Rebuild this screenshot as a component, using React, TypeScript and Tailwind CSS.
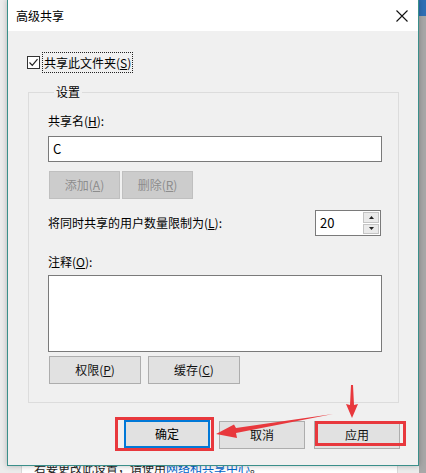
import React from 'react';

const font = { fontFamily: '"Noto Sans CJK SC", "Liberation Sans", sans-serif' };

function Btn({ label, disabled, className = '' }: { label: React.ReactNode; disabled?: boolean; className?: string }) {
  return (
    <div
      className={
        'flex items-center justify-center h-[28px] text-[12px] border ' +
        (disabled
          ? 'bg-[#cccccc] border-[#bfbfbf] text-[#8d8d8d] '
          : 'bg-[#e1e1e1] border-[#adadad] text-[#111] ') +
        className
      }
    >
      {label}
    </div>
  );
}

export default function App() {
  return (
    <div className="relative w-[426px] h-[473px] overflow-hidden bg-[#f3f3f3]" style={font}>
      {/* background window behind the dialog */}
      <div className="absolute left-0 top-0 w-[426px] h-[473px] flex">
        <div className="w-[22px] h-full bg-[#ececec] border-r border-[#d9d9d9]" />
        <div className="flex-1 bg-white flex flex-col justify-end">
          <div className="pl-[12px] h-[12px] overflow-hidden text-[12px] leading-[14px] text-[#222]">
            若要更改此设置，请使用<span className="text-[#0066cc] underline">网络和共享中心</span>。
          </div>
        </div>
        <div className="w-[22px] h-full bg-[#ececec] border-l border-[#d9d9d9]" />
        <div className="w-[7px] h-full bg-[#a8a8a8] flex flex-col">
          <div className="h-[16px] bg-[#2f6fb5]" />
        </div>
      </div>

      {/* dialog window */}
      <div className="absolute left-[7px] top-[-1px] w-[412px] h-[467px] border border-[#3a8f8a] bg-[#f0f0f0] flex flex-col shadow-[0_0_6px_rgba(0,0,0,0.25)]">
        {/* title bar */}
        <div className="h-[31px] bg-white flex items-center justify-between pl-[8px] pr-[9px]">
          <span className="text-[12px] text-black">高级共享</span>
          <svg width="14" height="14" viewBox="0 0 14 14">
            <path d="M1.5 1.5 L12.5 12.5 M12.5 1.5 L1.5 12.5" stroke="#111" strokeWidth="1.1" />
          </svg>
        </div>

        {/* body */}
        <div className="flex-1 flex flex-col pl-[19px] pr-[18px]">
          <div className="mt-[21px] flex items-center h-[21px]">
            <div className="w-[13px] h-[13px] border border-[#333] bg-white flex items-center justify-center">
              <svg width="11" height="11" viewBox="0 0 11 11">
                <path d="M1.5 5.5 L4.3 8.3 L9.5 2.2" fill="none" stroke="#222" strokeWidth="1.2" />
              </svg>
            </div>
            <div className="ml-[2px] h-[21px] px-[1px] flex items-center border border-dotted border-[#222] text-[12px] text-black">
              共享此文件夹(<span className="underline">S</span>)
            </div>
          </div>

          <fieldset className="mt-[12px] mx-[1px] h-[318px] border border-[#dcdcdc] pl-[19px] pr-[16px]">
            <legend className="ml-[6px] px-[2px] text-[12px] text-black leading-[14px]">设置</legend>
            <div className="mt-[14px] text-[12px] leading-[16px] text-black">
              共享名(<span className="underline">H</span>):
            </div>
            <div className="mt-[7px] h-[26px] border border-[#7a7a7a] bg-white flex items-center pl-[4px] text-[13px] text-black">
              C
            </div>
            <div className="mt-[9px] flex gap-[2px] pl-[1px]">
              <Btn disabled className="w-[71px]" label={<>添加(<span className="underline">A</span>)</>} />
              <Btn disabled className="w-[71px]" label={<>删除(<span className="underline">R</span>)</>} />
            </div>
            <div className="mt-[11px] flex items-center justify-between">
              <span className="text-[12px] text-black">
                将同时共享的用户数量限制为(<span className="underline">L</span>):
              </span>
              <div className="mr-[1px] w-[66px] h-[26px] border border-[#7a7a7a] bg-white flex">
                <div className="flex-1 flex items-center pl-[4px] text-[13px] text-black">20</div>
                <div className="w-[16px] my-[1px] mr-[1px] flex flex-col gap-[1px]">
                  <div className="flex-1 bg-[#eaeaea] border border-[#c4c4c4] flex items-center justify-center">
                    <svg width="5" height="3" viewBox="0 0 5 3"><path d="M0 3 L2.5 0 L5 3 Z" fill="#222" /></svg>
                  </div>
                  <div className="flex-1 bg-[#eaeaea] border border-[#c4c4c4] flex items-center justify-center">
                    <svg width="5" height="3" viewBox="0 0 5 3"><path d="M0 0 L2.5 3 L5 0 Z" fill="#222" /></svg>
                  </div>
                </div>
              </div>
            </div>
            <div className="mt-[18px] text-[12px] leading-[16px] text-black">
              注释(<span className="underline">O</span>):
            </div>
            <div className="mt-[5px] h-[77px] border border-[#7a7a7a] bg-white" />
            <div className="mt-[4px] flex gap-[7px] pl-[1px]">
              <Btn className="w-[92px]" label={<>权限(<span className="underline">P</span>)</>} />
              <Btn className="w-[92px]" label={<>缓存(<span className="underline">C</span>)</>} />
            </div>
          </fieldset>

          {/* dialog buttons */}
          <div className="mt-[18px] flex pl-[98px] gap-[8px]">
            <div className="w-[99px] h-[34px] border-[3px] border-[#e8383d] flex items-center justify-end pr-[1px] -ml-[10px] -mt-[4px]">
              <div className="w-[86px] h-[28px] border-2 border-[#0078d7] bg-[#e1e1e1] flex items-center justify-center text-[12px] text-black">
                确定
              </div>
            </div>
            <Btn className="w-[86px] -ml-[3px]" label="取消" />
            <div className="relative w-[86px] h-[28px] ml-[1px]">
              <Btn className="w-[86px]" label="应用" />
              <div className="absolute left-[1px] top-0 w-[91px] h-[25px] border-[3px] border-[#e8383d]" />
            </div>
          </div>
        </div>
      </div>

      {/* annotation arrows */}
      <svg className="absolute left-0 top-0 pointer-events-none" width="426" height="473" viewBox="0 0 426 473">
        <path d="M333 414 L236 428 L234 424.5 L216 434 L237 438 L236 433 Z" fill="#e8383d" />
        <path d="M351 385 L353 385 L354 405 L358 404 L352 418 L346 404 L350 405 Z" fill="#e8383d" />
      </svg>
    </div>
  );
}
